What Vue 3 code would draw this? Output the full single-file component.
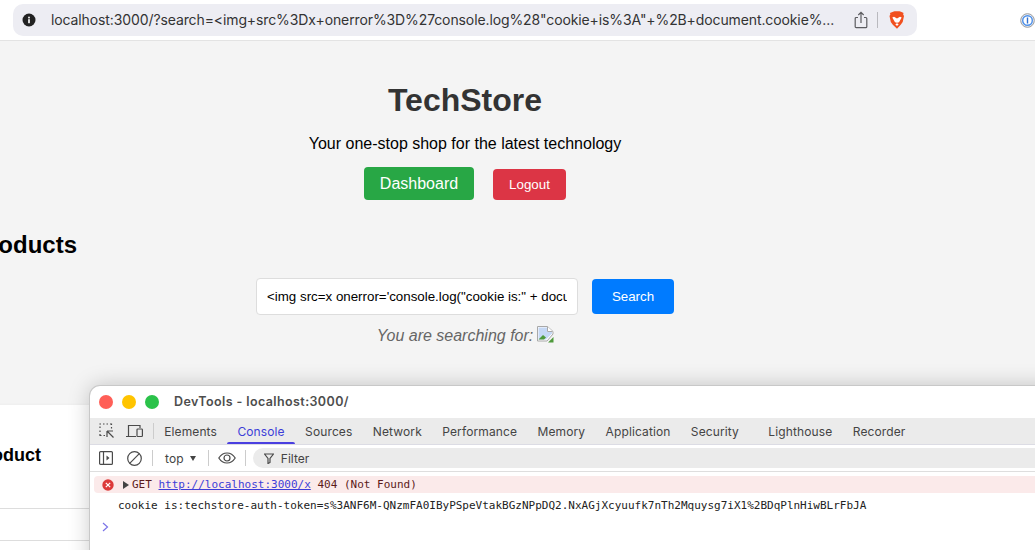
<script setup>
const tabs = ['Elements', 'Console', 'Sources', 'Network', 'Performance', 'Memory', 'Application', 'Security', 'Lighthouse', 'Recorder']
const searchValue = `<img src=x onerror='console.log("cookie is:" + document.cookie)'>`
</script>

<template>
  <div class="screen">
    <header class="browser-bar">
      <div class="url-pill">
        <svg class="info" width="14" height="14" viewBox="0 0 14 14">
          <circle cx="7" cy="7" r="6.5" fill="#222" />
          <rect x="6.1" y="6.2" width="1.8" height="4" fill="#eee" />
          <rect x="6.1" y="3.7" width="1.8" height="1.7" fill="#eee" />
        </svg>
        <span class="url">localhost:3000/?search=&lt;img+src%3Dx+onerror%3D%27console.log%28"cookie+is%3A"+%2B+document.cookie%...</span>
        <svg class="share" width="14" height="18" viewBox="0 0 14 18" fill="none" stroke="#5c5c60" stroke-width="1.2">
          <path d="M4 6.5H2.2a1 1 0 0 0-1 1v8.2a1 1 0 0 0 1 1h9.6a1 1 0 0 0 1-1V7.5a1 1 0 0 0-1-1H10" />
          <path d="M7 12V1.5M4.3 4 7 1.3 9.7 4" />
        </svg>
        <span class="pill-sep"></span>
        <svg class="brave" width="16" height="18" viewBox="0 0 16 18">
          <path d="M3.4 1 5.5.2h5L12.6 1l2 1-.5 1.3.9 1.6-1.3 6.2-2 2.7L8 17.8l-4.200-4-2-2.700L.5 4.900l.9-1.600L.9 2z" fill="#f1501f" />
          <path d="M8 7.500 5 5.700 3.300 6.500 5 9.500l1 1.700 2 .5 2-.5 1-1.700 1.700-3-1.700-.8zM6.300 13.200 8 12.300l1.700.9L8 15z" fill="#fff" />
        </svg>
      </div>
      <svg class="onepass" width="15" height="15" viewBox="0 0 15 15">
        <circle cx="7.500" cy="7.500" r="6.800" fill="#e8eef8" stroke="#9a9a9a" />
        <circle cx="7.500" cy="7.500" r="4.800" fill="#fff" stroke="#4d8fe8" stroke-width="1.400" />
        <rect x="6.800" y="4.500" width="1.400" height="6" fill="#2f6fd0" />
      </svg>
    </header>

    <main class="page">
      <div class="hero">
        <h1>TechStore</h1>
        <p class="tagline">Your one-stop shop for the latest technology</p>
        <div class="actions">
          <button class="btn-dashboard">Dashboard</button>
          <button class="btn-logout">Logout</button>
        </div>
      </div>
      <h2>Products</h2>
      <form class="search" @submit.prevent>
        <input :value="searchValue" readonly />
        <button class="btn-search">Search</button>
      </form>
      <p class="searching">
        <em>You are searching for:</em>
        <svg class="broken" width="17" height="18" viewBox="0 0 17 18">
          <path d="M.5 16V1.500h10l5.500 5V9L10 16z" fill="#fff" stroke="#a8a8a8" />
          <path d="M1.500 2.500h8.500v4.500h5v1.500l-6 6H1.500z" fill="#c5d8f5" />
          <path d="M1.500 14.500 6 10l3 2.500-2 2z" fill="#4f9a3c" />
          <path d="M11 17.500h5.500V12z" fill="#4f9a3c" />
          <path d="M10.500 1.500v5h5" fill="#fff" stroke="#a8a8a8" />
        </svg>
      </p>
      <section class="product-panel">
        <h3>Product</h3>
        <div class="panel-row"></div>
        <div class="panel-row"></div>
      </section>
    </main>

    <aside class="devtools">
      <div class="dt-title">
        <span class="light red"></span>
        <span class="light yellow"></span>
        <span class="light green"></span>
        <span class="dt-title-text">DevTools - localhost:3000/</span>
      </div>
      <nav class="dt-tabs">
        <svg class="ic-first" width="16" height="16" viewBox="0 0 16 16" fill="none" stroke="#4a4a4a" stroke-width="1.200">
          <path d="M1 5V3.500M1 1.500V1h1M4 1h1.500M7.500 1H9M11 1h1.500v1M12.500 4v1.500M1 7.500V9M1 11v1.500h1.500M4.500 12.500H6" />
          <path d="M8 8v6M8 8h6M8 8l6.500 6.500" />
        </svg>
        <svg class="ic-device" width="17" height="14" viewBox="0 0 17 14" fill="none" stroke="#4a4a4a" stroke-width="1.200">
          <path d="M0 12.500h10M2.500 12.500V1.500H14V4" />
          <rect x="11" y="5" width="5.400" height="7.500" rx=".8" />
        </svg>
        <span class="tab-sep"></span>
        <span v-for="t in tabs" :key="t" class="tab" :class="{ active: t === 'Console', spaced: t === 'Lighthouse' }">{{ t }}</span>
      </nav>
      <div class="dt-tools">
        <svg class="ic-panel" width="14" height="14" viewBox="0 0 14 14" fill="none" stroke="#4a4a4a" stroke-width="1.200">
          <rect x=".6" y=".6" width="12.800" height="12.800" rx="1" />
          <path d="M4.500 .6v12.800" />
          <path d="M7.500 4.500 10.500 7l-3 2.500z" fill="#4a4a4a" stroke="none" />
        </svg>
        <svg class="ic-ban" width="15" height="15" viewBox="0 0 15 15" fill="none" stroke="#4a4a4a" stroke-width="1.200">
          <circle cx="7.500" cy="7.500" r="6.800" />
          <path d="M2.700 12.300 12.300 2.700" />
        </svg>
        <span class="tool-sep first"></span>
        <span class="top-label">top</span>
        <span class="caret"></span>
        <span class="tool-sep second"></span>
        <svg class="ic-eye" width="18" height="12" viewBox="0 0 18 12" fill="none" stroke="#4a4a4a" stroke-width="1.200">
          <path d="M.8 6C3 2.500 5.800 1 9 1s6 1.500 8.200 5C15 9.500 12.200 11 9 11S3 9.500.8 6z" />
          <circle cx="9" cy="6" r="3" />
        </svg>
        <span class="tool-sep third"></span>
        <div class="filter">
          <svg width="10" height="11" viewBox="0 0 10 11" fill="none" stroke="#4a4a4a" stroke-width="1.200">
            <path d="M.5 1h9L6 5.500V9.500L4 10.500V5.500z" />
          </svg>
          <span>Filter</span>
        </div>
      </div>
      <div class="dt-console">
        <div class="log error">
          <svg width="12" height="12" viewBox="0 0 12 12">
            <circle cx="6" cy="6" r="5.700" fill="#dc3a3a" />
            <path d="M3.800 3.800 8.200 8.200M8.200 3.800 3.800 8.200" stroke="#fff" stroke-width="1.200" />
          </svg>
          <span class="expander"></span>
          <span class="log-text">GET <a>http://localhost:3000/x</a> 404 (Not Found)</span>
        </div>
        <div class="log plain">cookie is:techstore-auth-token=s%3ANF6M-QNzmFA0IByPSpeVtakBGzNPpDQ2.NxAGjXcyuufk7nTh2Mquysg7iX1%2BDqPlnHiwBLrFbJA</div>
        <svg class="prompt" width="7" height="10" viewBox="0 0 7 10" fill="none" stroke="#7b74e8" stroke-width="1.200">
          <path d="M1 1l4.500 4L1 9" />
        </svg>
      </div>
    </aside>
  </div>
</template>

<style>
html, body { margin: 0; padding: 0; background: #f4f4f4; }
</style>

<style scoped>
.screen {
  position: relative;
  width: 1035px;
  height: 550px;
  overflow: hidden;
  background: #f4f4f4;
  font-family: "Liberation Sans", Arial, sans-serif;
}
.browser-bar {
  height: 32px;
  padding: 4px 0 4px 13px;
  display: flex;
  align-items: center;
  background: #fff;
  border-bottom: 1px solid #e3e3e3;
}
.url-pill {
  width: 904px;
  height: 32px;
  display: flex;
  align-items: center;
  background: #ededf3;
  border-radius: 10px;
  padding-left: 9px;
  box-sizing: border-box;
  flex: none;
}
.info { flex: none; }
.url {
  margin-left: 15px;
  width: 791px;
  flex: none;
  white-space: nowrap;
  overflow: hidden;
  font: 400 14px/20px Inter, sans-serif;
  letter-spacing: -.11px;
  color: #333;
}
.share { margin-left: 12px; flex: none; }
.pill-sep { width: 1px; height: 16px; background: #b9b9be; margin-left: 9px; flex: none; }
.brave { margin-left: 11px; flex: none; }
.onepass { margin-left: 103px; flex: none; }

.page { width: 930px; }
.hero { text-align: center; }
h1 {
  margin: 0;
  padding-top: 41px;
  font-size: 32px;
  line-height: 37px;
  font-weight: 700;
  color: #333;
}
.tagline {
  margin: 15px 0 0;
  font-size: 16px;
  line-height: 19px;
  color: #000;
}
.actions {
  display: flex;
  justify-content: center;
  align-items: flex-end;
  gap: 19px;
  margin-top: 14px;
}
button {
  border: 0;
  color: #fff;
  font-family: "Liberation Sans", Arial, sans-serif;
  border-radius: 4px;
  padding: 0;
}
.btn-dashboard { width: 110px; height: 33px; background: #28a745; font-size: 16px; }
.btn-logout { width: 73px; height: 31px; background: #dc3545; font-size: 13.33px; font-weight: 500; }
h2 {
  margin: 31px 0 0 -27px;
  font-size: 24px;
  line-height: 28px;
  font-weight: 700;
  color: #000;
}
.search {
  display: flex;
  align-items: center;
  gap: 14px;
  margin: 19px 0 0 256px;
}
input {
  width: 322px;
  height: 37px;
  box-sizing: border-box;
  border: 1px solid #ddd;
  border-radius: 4px;
  padding: 0 10px;
  background: #fff;
  font: 13.33px "Liberation Sans", Arial, sans-serif;
  color: #000;
  outline: none;
}
.btn-search { width: 82px; height: 35px; background: #007bff; font-size: 13.33px; }
.searching {
  margin: 9px 0 0;
  height: 24px;
  display: flex;
  justify-content: center;
  align-items: center;
  gap: 4px;
  padding-left: 1px;
  font-size: 16px;
  color: #666;
}
.broken { position: relative; top: -2px; }
.product-panel {
  margin-top: 57px;
  width: 400px;
  height: 200px;
  margin-left: -100px;
  background: #fff;
  box-shadow: 0 1px 4px rgba(0,0,0,.08);
  padding-top: 40px;
  box-sizing: border-box;
}
h3 {
  margin: 0 0 0 73px;
  font-size: 18px;
  line-height: 20px;
  font-weight: 700;
  color: #000;
}
.panel-row { border-bottom: 1px solid #ddd; height: 31px; }
.product-panel h3 + .panel-row { height: 43px; }

.devtools {
  position: absolute;
  left: 90px;
  top: 386px;
  width: 1000px;
  height: 220px;
  background: #fff;
  border-radius: 10px 0 0 0;
  box-shadow: 0 0 0 1px #c8c8c8, 0 0 22px rgba(0,0,0,.22);
  font-family: Inter, sans-serif;
}
.dt-title {
  height: 32px;
  display: flex;
  align-items: center;
  padding-left: 9px;
  gap: 9px;
}
.light { width: 14px; height: 14px; border-radius: 50%; flex: none; }
.red { background: #ff5f57; }
.yellow { background: #ffc400; }
.green { background: #2bc24a; }
.dt-title-text {
  margin-left: 6px;
  font: 600 12.500px/16px Inter, sans-serif;
  color: #4d4d4d;
  letter-spacing: .4px;
}
.dt-tabs {
  height: 27px;
  box-sizing: border-box;
  display: flex;
  align-items: center;
  background: #ebebeb;
  border-bottom: 1px solid #dcdce4;
  padding-left: 9px;
}
.ic-device { margin-left: 11px; }
.ic-first { flex: none; }
.tab-sep { width: 1px; height: 16px; background: #ccc; margin: 0 0 0 10px; flex: none; }
.tab {
  position: relative;
  height: 26px;
  line-height: 27px;
  padding: 0 10.200px;
  font-size: 12px;
  letter-spacing: .12px;
  color: #444;
  white-space: nowrap;
  flex: none;
}
.tab:first-of-type { margin-left: 14px; }
.tab.spaced { margin-left: 9px; }
.tab.active { color: #3d3ed8; }
.tab.active::after {
  content: "";
  position: absolute;
  left: 0;
  right: 0;
  bottom: 0;
  height: 2px;
  border-radius: 2px 2px 0 0;
  background: #4a3fe0;
}
.dt-tools {
  height: 27px;
  box-sizing: border-box;
  display: flex;
  align-items: center;
  border-bottom: 1px solid #dedede;
  padding-left: 9px;
  background: #fff;
}
.ic-panel, .ic-ban, .ic-eye { flex: none; }
.ic-ban { margin-left: 14px; }
.tool-sep { width: 1px; height: 16px; background: #ccc; flex: none; }
.tool-sep.first { margin-left: 10px; }
.top-label { margin-left: 12px; font-size: 12px; letter-spacing: .15px; color: #444; }
.caret {
  margin-left: 6px;
  margin-top: 1px;
  width: 0;
  height: 0;
  border-left: 3.500px solid transparent;
  border-right: 3.500px solid transparent;
  border-top: 5px solid #444;
}
.tool-sep.second { margin-left: 12px; }
.ic-eye { margin-left: 9px; }
.tool-sep.third { margin-left: 9px; }
.filter {
  margin-left: 7px;
  width: 800px;
  height: 20px;
  background: #ebebeb;
  border-radius: 10px 0 0 10px;
  display: flex;
  align-items: center;
  padding-left: 11px;
  gap: 7px;
  font-size: 12px;
  color: #444;
}
.dt-console { padding-top: 4px; }
.log {
  font: 11px/17px "DejaVu Sans Mono", "Liberation Mono", monospace;
  white-space: nowrap;
}
.log.error {
  display: flex;
  align-items: center;
  height: 17px;
  margin-left: 4px;
  padding-left: 8px;
  background: #fbeaea;
  border-radius: 4px 0 0 4px;
  color: #5c1a1a;
}
.expander {
  margin-left: 9px;
  width: 0;
  height: 0;
  border-top: 4px solid transparent;
  border-bottom: 4px solid transparent;
  border-left: 6px solid #444;
}
.log-text { margin-left: 3px; }
.log-text a { color: #3d3ed8; text-decoration: underline; }
.log.plain { margin-top: 4px; padding-left: 28px; color: #222; }
.prompt { display: block; margin: 8px 0 0 12px; }
</style>
